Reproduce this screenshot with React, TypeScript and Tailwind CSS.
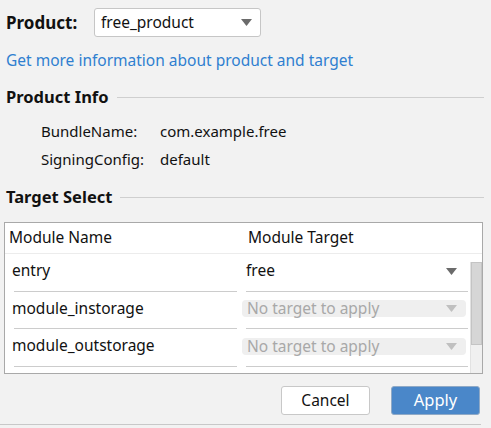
import React from "react";

const Arrow = ({ color = "#6b6b6b" }: { color?: string }) => (
  <svg width="11" height="7" viewBox="0 0 11 7">
    <polygon points="0,0 11,0 5.5,7" fill={color} />
  </svg>
);

const SectionTitle = ({ title }: { title: string }) => (
  <div className="flex items-center h-[20px] pl-[6px] pr-[7px]">
    <span className="text-[16.5px] font-bold text-[#111] leading-[20px] whitespace-nowrap">{title}</span>
    <div className="flex-1 ml-[8px] h-px bg-[#cfcfcf]" />
  </div>
);

const Row = ({
  name,
  target,
  disabled,
  h,
}: {
  name: string;
  target: string;
  disabled?: boolean;
  h: string;
}) => (
  <div className={`flex ${h}`}>
    <div className="w-[237px] flex flex-col">
      <div className="flex-1 ml-[9px] mr-[5px] pb-[3px] border-b border-[#cccccc] flex items-center">
        <span className="ml-[-2px] text-[15.5px] text-[#111]">{name}</span>
      </div>
    </div>
    <div className="w-[227px] flex flex-col">
      <div className="flex-1 ml-[4px] mr-[1px] pb-[3px] border-b border-[#cccccc] flex items-center">
        {disabled ? (
          <div className="ml-[-4px] w-[224px] h-[17px] rounded-[4px] bg-[#efefef] flex items-center justify-between pl-[5px] pr-[9px]">
            <span className="text-[15.5px] text-[#a8a8a8] leading-[17px]">{target}</span>
            <Arrow color="#c0c0c0" />
          </div>
        ) : (
          <div className="w-full flex items-center justify-between pr-[11px]">
            <span className="text-[15.5px] text-[#111]">{target}</span>
            <Arrow />
          </div>
        )}
      </div>
    </div>
  </div>
);

export default function App() {
  return (
    <div
      className="w-[491px] h-[428px] bg-[#f2f2f2] overflow-hidden flex flex-col"
      style={{ fontFamily: '"Noto Sans", "Open Sans", sans-serif' }}
    >
      <div className="flex items-center mt-[8px] pl-[6px] h-[29px]">
        <span className="w-[88px] text-[17px] font-bold text-[#111]">Product:</span>
        <div className="w-[167px] h-[29px] bg-white border border-[#c6c6c6] rounded-[3px] flex items-center justify-between pl-[6px] pr-[8px]">
          <span className="text-[15.5px] text-[#111]">free_product</span>
          <Arrow />
        </div>
      </div>
      <div className="mt-[13px] pl-[6px] h-[20px] leading-[20px] text-[15.5px] text-[#2f7fd0]">
        Get more information about product and target
      </div>
      <div className="mt-[17px]">
        <SectionTitle title="Product Info" />
      </div>
      <div className="mt-[14px] pl-[41px] flex flex-col gap-[8px]">
        <div className="flex h-[20px] leading-[20px] text-[15px] text-[#111]">
          <span className="w-[119px]">BundleName:</span>
          <span>com.example.free</span>
        </div>
        <div className="flex h-[20px] leading-[20px] text-[15px] text-[#111]">
          <span className="w-[119px]">SigningConfig:</span>
          <span>default</span>
        </div>
      </div>
      <div className="mt-[18px]">
        <SectionTitle title="Target Select" />
      </div>
      <div className="mt-[15px] ml-[4px] w-[479px] h-[152px] border border-[#a9a9a9] bg-white flex flex-col relative">
        <div className="h-[31px] border-b border-[#ececec] flex items-center">
          <span className="w-[243px] pl-[4px] text-[15.5px] text-[#111]">Module Name</span>
          <span className="text-[15.5px] text-[#111]">Module Target</span>
        </div>
        <div className="flex flex-1">
          <div className="flex flex-col w-[464px]">
            <Row name="entry" target="free" h="h-[38px]" />
            <Row name="module_instorage" target="No target to apply" disabled h="h-[37px]" />
            <Row name="module_outstorage" target="No target to apply" disabled h="h-[38px]" />
          </div>
          <div className="w-[12px] ml-[1px] mt-[8px] bg-[#f0f0f0] border-l border-[#e2e2e2] flex flex-col">
            <div className="h-[83px] bg-[#d6d6d6] border border-[#c4c4c4]" />
          </div>
        </div>
      </div>
      <div className="flex justify-end gap-[21px] mt-[12px] pr-[11px]">
        <button className="w-[89px] h-[29px] bg-white border border-[#c8c8c8] rounded-[3px] text-[15.5px] text-[#111]">
          Cancel
        </button>
        <button className="w-[89px] h-[29px] bg-[#4a87c9] border border-[#8fa9c6] rounded-[3px] text-[16.5px] text-white">
          Apply
        </button>
      </div>
      <div className="mt-[9px] h-px w-[481px] bg-[#c8c8c8]" />
    </div>
  );
}
